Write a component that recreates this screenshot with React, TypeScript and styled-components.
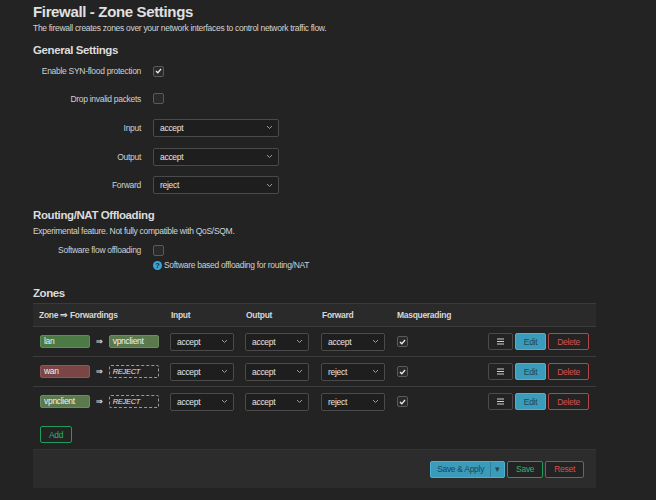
import * as React from "react";
import styled, { createGlobalStyle } from "styled-components";

const GlobalStyle = createGlobalStyle`
  html, body {
    margin: 0;
    padding: 0;
    background: #232323;
  }
  body {
    font-family: "Liberation Sans", Arial, sans-serif;
    color: #d0d0d0;
    font-size: 8.5px;
    letter-spacing: -0.3px;
  }
`;

const Page = styled.div`
  width: 563px;
  padding: 3px 0 0 33px;
  display: flex;
  flex-direction: column;
`;

const Title = styled.h2`
  margin: 0;
  font-size: 15px;
  letter-spacing: -0.35px;
  font-weight: 700;
  color: #e0e0e0;
  line-height: 18px;
`;

const Description = styled.div<{ $top?: number }>`
  line-height: 12px;
  color: #d4d4d4;
  margin-top: ${(p) => p.$top ?? 0}px;
`;

const SectionTitle = styled.h3<{ $top: number }>`
  margin: ${(p) => p.$top}px 0 0;
  font-size: 11.5px;
  letter-spacing: -0.4px;
  font-weight: 700;
  color: #dcdcdc;
  line-height: 16px;
`;

const FormRow = styled.div<{ $height?: number }>`
  display: grid;
  grid-template-columns: 108px 1fr;
  column-gap: 12px;
  align-items: center;
  height: ${(p) => p.$height ?? 29}px;
`;

const Label = styled.div`
  text-align: right;
  color: #d0d0d0;
`;

const CheckBox = styled.span`
  display: inline-flex;
  align-items: center;
  justify-content: center;
  vertical-align: middle;
  width: 9px;
  height: 9px;
  border: 1px solid #5a5a5a;
  border-radius: 2px;
  background: #2a2a2a;
`;

const SelectBox = styled.div<{ $width: number }>`
  width: ${(p) => p.$width}px;
  height: 18px;
  box-sizing: border-box;
  border: 1px solid #4a4a4a;
  border-radius: 2px;
  background: #1e1e1e;
  display: flex;
  align-items: center;
  justify-content: space-between;
  padding: 0 5px 0 6px;
  color: #e4e4e4;
`;

const HelpRow = styled.div`
  display: flex;
  align-items: center;
  gap: 2px;
  margin-left: 120px;
  margin-top: -4px;
  height: 12px;
  color: #d0d0d0;
`;

const Table = styled.div`
  margin-top: 2px;
  display: flex;
  flex-direction: column;
`;

const TableRow = styled.div<{ $header?: boolean }>`
  display: grid;
  grid-template-columns: 132px 75px 76px 75px 1fr;
  align-items: center;
  height: ${(p) => (p.$header ? 22 : 29)}px;
  border-top: 1px solid ${(p) => (p.$header ? "#3a3a3a" : "#3c3c3c")};
  background: ${(p) => (p.$header ? "#2a2a2a" : "transparent")};
`;

const HeadCell = styled.div`
  padding-left: 6px;
  font-weight: 700;
  color: #d6d6d6;
`;

const Cell = styled.div`
  padding-left: 5px;
  display: flex;
  align-items: center;
`;

const ZoneCell = styled(Cell)`
  padding-left: 7px;
  gap: 6px;
`;

const ActionCell = styled(Cell)`
  padding: 0 7px 0 6px;
  justify-content: space-between;
`;

const ButtonGroup = styled.div`
  display: flex;
  gap: 2px;
`;

const Badge = styled.span<{ $bg: string; $border: string }>`
  width: 50px;
  height: 13px;
  box-sizing: border-box;
  border-radius: 2px;
  background: ${(p) => p.$bg};
  border: 1px solid ${(p) => p.$border};
  color: #f0f0f0;
  line-height: 11px;
  padding-left: 3px;
`;

const Reject = styled.span`
  width: 50px;
  height: 13px;
  box-sizing: border-box;
  border-radius: 2px;
  border: 1px dashed #9a9a9a;
  font-style: italic;
  font-size: 7.5px;
  line-height: 11px;
  color: #e4e4e4;
  padding-left: 3px;
`;

const Arrow = styled.span`
  color: #d0d0d0;
  font-size: 8px;
  font-weight: 700;
`;

type Kind = "neutral" | "primary" | "danger" | "positive";

const borderOf = (k: Kind) =>
  k === "primary" ? "#4fb1cf" : k === "danger" ? "#b84545" : k === "positive" ? "#1f9c5c" : "#4a4a4a";

const colorOf = (k: Kind) =>
  k === "primary" ? "#1f4656" : k === "danger" ? "#d9504f" : k === "positive" ? "#2bb56f" : "#d0d0d0";

const Button = styled.button<{ $kind: Kind }>`
  height: 17px;
  box-sizing: border-box;
  border-radius: 2px;
  font-family: inherit;
  font-size: 8.5px;
  letter-spacing: inherit;
  padding: 0 8px;
  display: flex;
  align-items: center;
  cursor: pointer;
  border: 1px solid ${(p) => borderOf(p.$kind)};
  background: ${(p) => (p.$kind === "primary" ? "#3b9bbb" : "#232323")};
  color: ${(p) => colorOf(p.$kind)};
`;

const SplitButton = styled.div`
  display: flex;
  height: 17px;
  box-sizing: border-box;
  border: 1px solid #4fb1cf;
  border-radius: 2px;
  background: #3b9bbb;
  color: #1f4656;
`;

const SplitMain = styled.span`
  display: flex;
  align-items: center;
  padding: 0 6px;
  border-right: 1px solid #2f7f99;
`;

const SplitCaret = styled.span`
  display: flex;
  align-items: center;
  justify-content: center;
  width: 13px;
`;

const AddRow = styled.div`
  display: flex;
  padding: 10px 0 0 7px;
`;

const Footer = styled.div`
  margin-top: 6px;
  height: 39px;
  box-sizing: border-box;
  background: #2c2c2c;
  border-top: 1px solid #333;
  display: flex;
  align-items: center;
  justify-content: flex-end;
  gap: 2px;
  padding-right: 12px;
`;

const Chevron = () => (
  <svg width="7" height="5" viewBox="0 0 7 5">
    <path d="M1 1l2.5 2.5L6 1" fill="none" stroke="#9a9a9a" strokeWidth="1" />
  </svg>
);

const Check = () => (
  <svg width="7" height="6" viewBox="0 0 7 6">
    <path d="M1 3l1.8 1.8L6 1" fill="none" stroke="#f0f0f0" strokeWidth="1.3" />
  </svg>
);

const Burger = () => (
  <svg width="7" height="7" viewBox="0 0 7 7">
    <path d="M0 1h7M0 3.5h7M0 6h7" stroke="#d0d0d0" strokeWidth="1" />
  </svg>
);

const HelpIcon = () => (
  <svg width="9" height="9" viewBox="0 0 10 10">
    <circle cx="5" cy="5" r="5" fill="#3ba3d6" />
    <text
      x="5"
      y="8.2"
      textAnchor="middle"
      fontSize="8.5"
      fontWeight="700"
      fill="#1d2a33"
      fontFamily="Liberation Sans, sans-serif"
    >
      ?
    </text>
  </svg>
);

const Select = ({ value, width }: { value: string; width: number }) => (
  <SelectBox $width={width}>
    <span>{value}</span>
    <Chevron />
  </SelectBox>
);

const Box = ({ checked }: { checked?: boolean }) => <CheckBox>{checked && <Check />}</CheckBox>;

type Zone = {
  name: string;
  bg: string;
  border: string;
  forward?: { name: string; bg: string; border: string };
  input: string;
  output: string;
  fwd: string;
};

const zones: Zone[] = [
  {
    name: "lan",
    bg: "#4c7a45",
    border: "#5e8c57",
    forward: { name: "vpnclient", bg: "#5a7a4e", border: "#6d8c60" },
    input: "accept",
    output: "accept",
    fwd: "accept",
  },
  { name: "wan", bg: "#7a4545", border: "#8c5757", input: "accept", output: "accept", fwd: "reject" },
  { name: "vpnclient", bg: "#5a7a4e", border: "#6d8c60", input: "accept", output: "accept", fwd: "reject" },
];

const App = () => {
  return (
    <>
      <GlobalStyle />
      <Page>
        <Title>Firewall - Zone Settings</Title>
        <Description $top={1}>
          The firewall creates zones over your network interfaces to control network traffic flow.
        </Description>
        <SectionTitle $top={8}>General Settings</SectionTitle>
        <FormRow $height={26}>
          <Label>Enable SYN-flood protection</Label>
          <div>
            <Box checked />
          </div>
        </FormRow>
        <FormRow>
          <Label>Drop invalid packets</Label>
          <div>
            <Box />
          </div>
        </FormRow>
        <FormRow>
          <Label>Input</Label>
          <Select value="accept" width={126} />
        </FormRow>
        <FormRow>
          <Label>Output</Label>
          <Select value="accept" width={126} />
        </FormRow>
        <FormRow $height={28}>
          <Label>Forward</Label>
          <Select value="reject" width={126} />
        </FormRow>
        <SectionTitle $top={8}>Routing/NAT Offloading</SectionTitle>
        <Description $top={2}>Experimental feature. Not fully compatible with QoS/SQM.</Description>
        <FormRow $height={26}>
          <Label>Software flow offloading</Label>
          <div>
            <Box />
          </div>
        </FormRow>
        <HelpRow>
          <HelpIcon />
          <span>Software based offloading for routing/NAT</span>
        </HelpRow>
        <SectionTitle $top={14}>Zones</SectionTitle>
        <Table>
          <TableRow $header>
            <HeadCell>Zone ⇒ Forwardings</HeadCell>
            <HeadCell>Input</HeadCell>
            <HeadCell>Output</HeadCell>
            <HeadCell>Forward</HeadCell>
            <HeadCell>Masquerading</HeadCell>
          </TableRow>
          {zones.map((z) => (
            <TableRow key={z.name}>
              <ZoneCell>
                <Badge $bg={z.bg} $border={z.border}>
                  {z.name}
                </Badge>
                <Arrow>⇒</Arrow>
                {z.forward ? (
                  <Badge $bg={z.forward.bg} $border={z.forward.border}>
                    {z.forward.name}
                  </Badge>
                ) : (
                  <Reject>REJECT</Reject>
                )}
              </ZoneCell>
              <Cell>
                <Select value={z.input} width={64} />
              </Cell>
              <Cell>
                <Select value={z.output} width={64} />
              </Cell>
              <Cell>
                <Select value={z.fwd} width={64} />
              </Cell>
              <ActionCell>
                <Box checked />
                <ButtonGroup>
                  <Button $kind="neutral">
                    <Burger />
                  </Button>
                  <Button $kind="primary">Edit</Button>
                  <Button $kind="danger">Delete</Button>
                </ButtonGroup>
              </ActionCell>
            </TableRow>
          ))}
        </Table>
        <AddRow>
          <Button $kind="positive">Add</Button>
        </AddRow>
        <Footer>
          <SplitButton>
            <SplitMain>Save &amp; Apply</SplitMain>
            <SplitCaret>▾</SplitCaret>
          </SplitButton>
          <Button $kind="positive">Save</Button>
          <Button $kind="danger">Reset</Button>
        </Footer>
      </Page>
    </>
  );
};

export default App;
